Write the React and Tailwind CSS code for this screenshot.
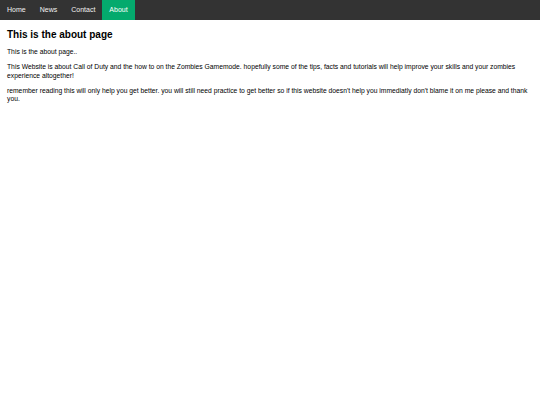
import React from 'react';

const links = ['Home', 'News', 'Contact', 'About'];

const App = () => {
    return (
        <div className="min-h-[405px] bg-white font-['Liberation_Sans',Arial,sans-serif]">
            <nav className="flex h-[20px] bg-[#333333]">
                {links.map(link => (
                    <a
                        key={link}
                        href="#"
                        className={`flex items-center px-[7px] text-[7px] text-[#f2f2f2] ${link === 'About' ? 'bg-[#04aa6d] text-white' : ''}`}
                    >
                        {link}
                    </a>
                ))}
            </nav>

            <div className="px-[7px] text-[6.75px] leading-[8.3px] text-black">
                <h2 className="mt-[9px] mb-[7px] text-[10px] leading-[12px] font-bold">This is the about page</h2>
                <p className="mb-[7px]">This is the about page..</p>
                <p className="mb-[7px]">
                    This Website is about Call of Duty and the how to on the Zombies Gamemode. hopefully some of the tips, facts and tutorials will help improve your skills and your zombies experience altogether!
                </p>
                <p>
                    remember reading this will only help you get better. you will still need practice to get better so if this website doesn't help you immediatly don't blame it on me please and thank you.
                </p>
            </div>
        </div>
    );
};

export default App;
